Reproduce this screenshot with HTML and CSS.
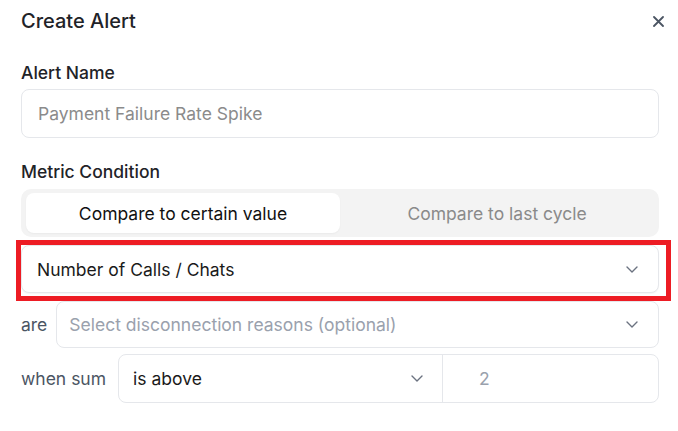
FILE: index.html
```html
<!DOCTYPE html>
<html lang="en">
<head>
<meta charset="utf-8">
<title>Create Alert</title>
<link rel="stylesheet" href="styles.css">
</head>
<body>
<div class="dialog">
  <header class="header">
    <h1 class="title">Create Alert</h1>
    <button class="close" aria-label="Close">
      <svg width="11" height="11" viewBox="0 0 11 11"><path d="M1 1L10 10M10 1L1 10" stroke="#4b5563" stroke-width="1.8" stroke-linecap="round"/></svg>
    </button>
  </header>

  <label class="label label-first">Alert Name</label>
  <div class="input"><span class="placeholder">Payment Failure Rate Spike</span></div>

  <label class="label">Metric Condition</label>
  <div class="segmented">
    <div class="seg seg-active">Compare to certain value</div>
    <div class="seg">Compare to last cycle</div>
  </div>

  <div class="highlight-wrap">
    <div class="select select-metric">
      <span class="value">Number of Calls / Chats</span>
      <svg class="chev" width="12" height="7" viewBox="0 0 12 7"><path d="M1 1l5 5 5-5" fill="none" stroke="#6b7280" stroke-width="1.4" stroke-linecap="round" stroke-linejoin="round"/></svg>
    </div>
    <div class="highlight"></div>
  </div>

  <div class="row row-are">
    <span class="row-label">are</span>
    <div class="select select-reasons grow">
      <span class="hint">Select disconnection reasons (optional)</span>
      <svg class="chev" width="12" height="7" viewBox="0 0 12 7"><path d="M1 1l5 5 5-5" fill="none" stroke="#6b7280" stroke-width="1.4" stroke-linecap="round" stroke-linejoin="round"/></svg>
    </div>
  </div>

  <div class="row row-when">
    <span class="row-label">when sum</span>
    <div class="compound grow">
      <div class="compound-select">
        <span class="value">is above</span>
        <svg class="chev" width="12" height="7" viewBox="0 0 12 7"><path d="M1 1l5 5 5-5" fill="none" stroke="#6b7280" stroke-width="1.4" stroke-linecap="round" stroke-linejoin="round"/></svg>
      </div>
      <div class="compound-input"><span class="num">2</span></div>
    </div>
  </div>

  <label class="label label-next">Action</label>
</div>
</body>
</html>
```
FILE: styles.css
```css
* { box-sizing: border-box; }
html, body { margin: 0; padding: 0; background: #ffffff; overflow: hidden; }
body { font-family: Inter, "Noto Sans", sans-serif; color: #1f2328; }

.dialog {
  display: flex;
  flex-direction: column;
  padding: 0 19px 0 21px;
  width: 678px;
}

.header {
  display: flex;
  align-items: center;
  justify-content: space-between;
  height: 42px;
}
.title {
  margin: 0;
  font-size: 20px;
  line-height: 24px;
  font-weight: 500;
  color: #1f2328;
}
.close {
  border: 0;
  background: none;
  padding: 0;
  width: 11px;
  height: 11px;
  margin-right: -5px;
  display: flex;
}

.label {
  font-size: 17.5px;
  font-weight: 500;
  line-height: 21px;
  color: #1f2328;
  margin-top: 23px;
  margin-bottom: 7px;
}
.label-first { margin-top: 20px; margin-bottom: 6px; }
.label-next { margin-top: 25px; }

.input {
  height: 49px;
  border: 1px solid #e5e7eb;
  border-radius: 8px;
  display: flex;
  align-items: center;
  padding: 0 16px;
  font-size: 17.5px;
}
.placeholder { color: #8b8b8b; }

.segmented {
  display: flex;
  height: 48px;
  padding: 4px 5px;
  background: #f3f3f3;
  border-radius: 10px;
}
.seg {
  flex: 1;
  display: flex;
  align-items: center;
  justify-content: center;
  font-size: 17.5px;
  color: #8a8a8a;
  border-radius: 8px;
}
.seg-active {
  background: #ffffff;
  color: #111111;
  box-shadow: 0 1px 2px rgba(0,0,0,0.04);
}

.highlight-wrap {
  position: relative;
  margin-top: 8px;
}
.highlight {
  position: absolute;
  top: -5px;
  left: -5px;
  right: -12px;
  bottom: -8px;
  border: 5px solid #ed1c24;
  pointer-events: none;
}

.select {
  height: 48px;
  border: 1px solid #e5e7eb;
  border-radius: 8px;
  display: flex;
  align-items: center;
  justify-content: space-between;
  padding: 0 20px 0 15px;
  font-size: 17.5px;
  background: #fff;
}
.select-metric { box-shadow: 0 1px 1px rgba(0,0,0,0.04); }
.select-reasons { height: 47px; padding-left: 12px; }
.value { color: #1a1a1a; }
.hint { color: #9aa1ad; }
.chev { flex: none; }

.row {
  display: flex;
  align-items: center;
}
.row-are { margin-top: 8px; gap: 9px; }
.row-when { margin-top: 6px; gap: 12px; }
.row-label {
  font-size: 17.5px;
  color: #4b5563;
}
.grow { flex: 1; }

.compound {
  height: 49px;
  display: flex;
  border: 1px solid #e5e7eb;
  border-radius: 8px;
}
.compound-select {
  width: 324px;
  display: flex;
  align-items: center;
  justify-content: space-between;
  padding: 0 19px 0 14px;
  border-right: 1px solid #e5e7eb;
  font-size: 17.5px;
}
.compound-input {
  flex: 1;
  display: flex;
  align-items: center;
  padding-left: 36px;
  font-size: 17.5px;
}
.num { color: #9aa1ad; }
```
